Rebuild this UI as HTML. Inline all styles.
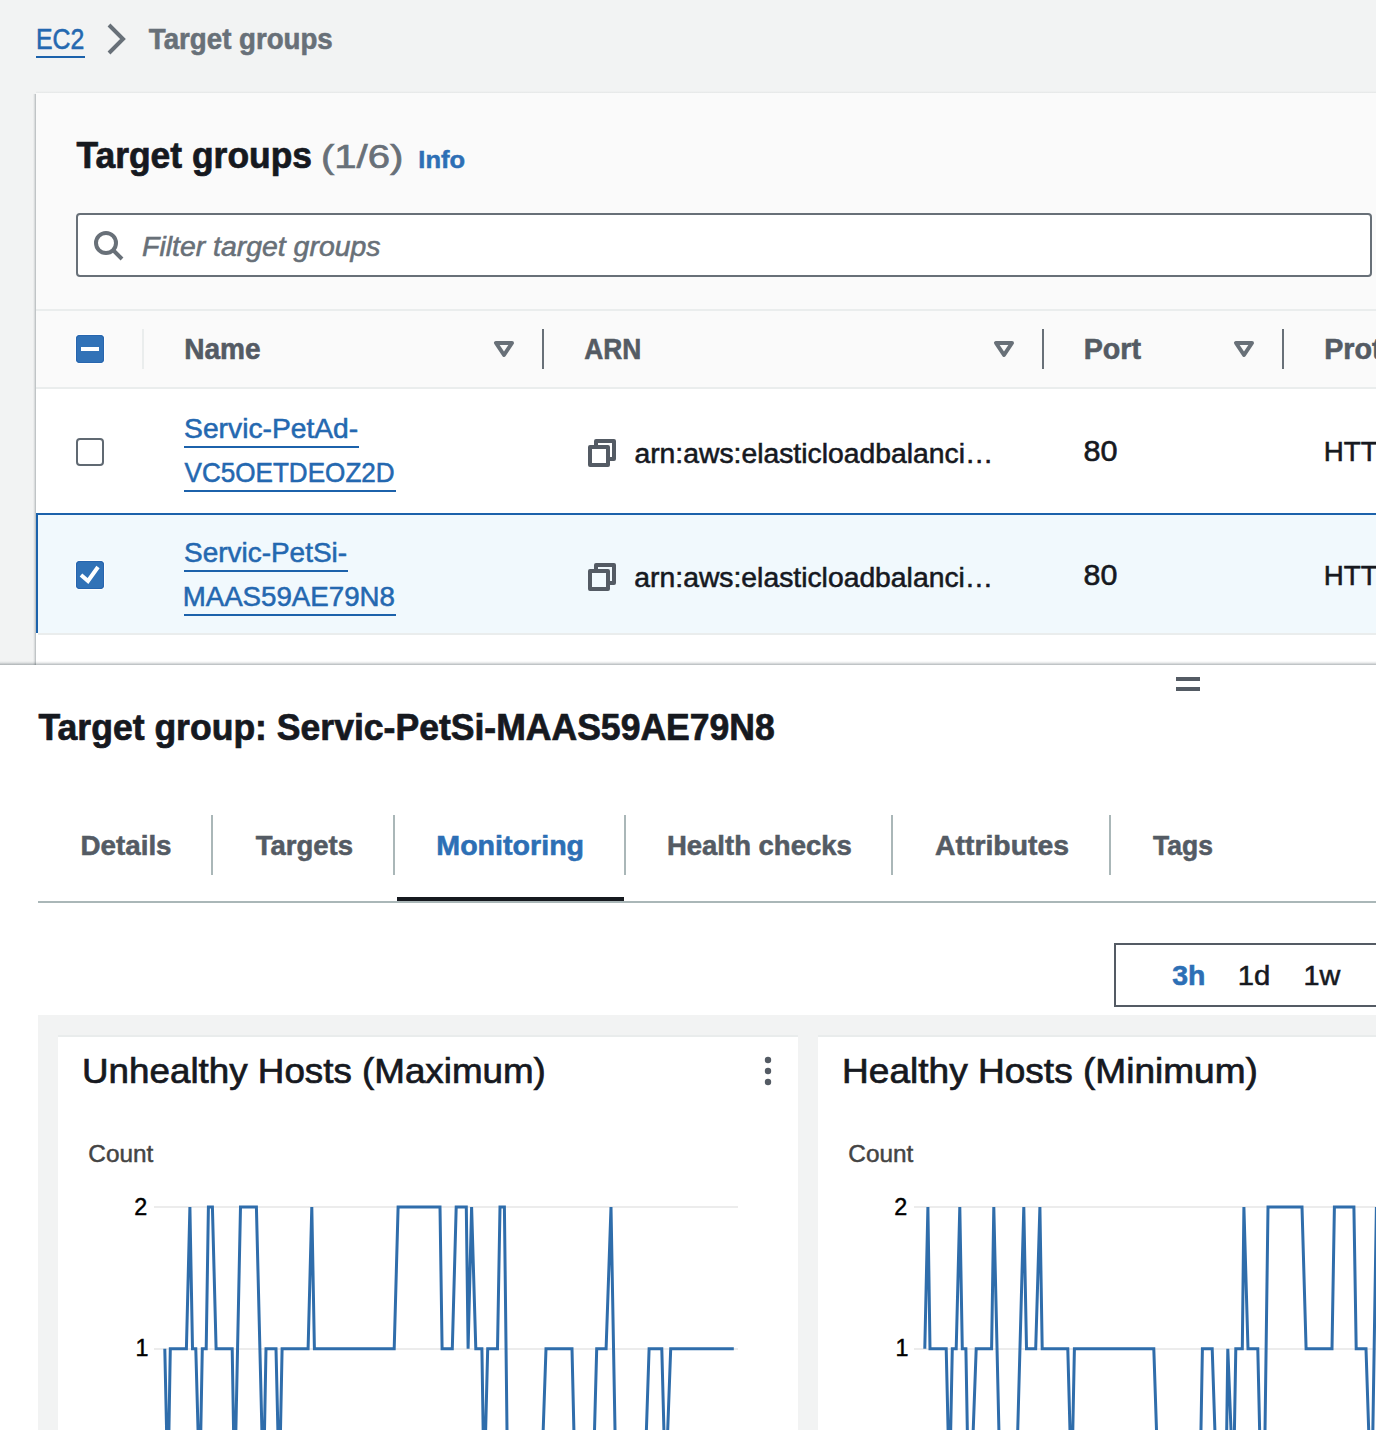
<!DOCTYPE html>
<html><head><meta charset="utf-8"><title>Target groups</title>
<style>
html,body{margin:0;padding:0;}
body{width:1376px;height:1430px;overflow:hidden;position:relative;background:#f2f3f3;font-family:"Liberation Sans",sans-serif;}
.a{position:absolute;}
.t{position:absolute;white-space:nowrap;transform-origin:0 0;-webkit-text-stroke:0.02em;font-family:"Liberation Sans",sans-serif;}
.ul{position:absolute;height:2px;background:#1c62ab;}
</style></head><body>
<!-- container -->
<div class="a" style="left:33px;top:94px;width:3px;height:571px;background:linear-gradient(to right,rgba(8,24,32,0),rgba(8,24,32,0.07) 40%,rgba(8,24,32,0.27));"></div>
<div class="a" style="left:36px;top:91px;width:1340px;height:2px;background:linear-gradient(to bottom,rgba(0,0,0,0),rgba(8,24,32,0.06));"></div>
<div class="a" style="left:36px;top:93px;width:1340px;height:216px;background:#fafafa;"></div>
<div class="a" style="left:36px;top:309px;width:1340px;height:2px;background:#eaeded;"></div>
<div class="a" style="left:36px;top:311px;width:1340px;height:76px;background:#fafafa;"></div>
<div class="a" style="left:36px;top:387px;width:1340px;height:2px;background:#eaeded;"></div>
<div class="a" style="left:36px;top:389px;width:1340px;height:281px;background:#ffffff;"></div>
<!-- selected row -->
<div class="a" style="left:36px;top:513px;width:1340px;height:120px;background:#f1f9fd;"></div>
<div class="a" style="left:36px;top:513px;width:1340px;height:2px;background:#1c62ab;"></div>
<div class="a" style="left:36px;top:513px;width:2px;height:120px;background:#1c62ab;"></div>
<div class="a" style="left:38px;top:633px;width:1338px;height:2px;background:#eaeded;"></div>
<!-- filter input -->
<div class="a" style="left:76px;top:213px;width:1292px;height:60px;border:2px solid #687078;border-radius:4px;background:#fff;"></div>
<svg class="a" style="left:92px;top:229px" width="32" height="32" viewBox="0 0 32 32"><circle cx="14" cy="14" r="10" fill="none" stroke="#687078" stroke-width="4"/><path d="M30 30 L21 21" stroke="#687078" stroke-width="4"/></svg>
<!-- breadcrumb chevron -->
<svg class="a" style="left:101px;top:23px" width="32" height="32" viewBox="0 0 32 32"><path d="M8 2 L22 16 L8 30" fill="none" stroke="#687078" stroke-width="4" stroke-linejoin="miter"/></svg>
<div class="ul" style="left:36px;top:56px;width:48.7px;"></div>
<!-- header checkbox indeterminate -->
<div class="a" style="left:76px;top:335px;width:28px;height:28px;border-radius:4px;background:#3172b7;box-shadow:inset 0 0 0 1px #2765ae,0 0 0 1px #fff;"></div>
<div class="a" style="left:81px;top:347px;width:18px;height:4px;background:#fff;"></div>
<div class="a" style="left:142px;top:329px;width:2px;height:40px;background:#eaeded;"></div>
<!-- sort carets + dividers -->
<svg class="a" style="left:488px;top:333px" width="32" height="32" viewBox="0 0 32 32"><path d="M8 10 H24 L16 22 Z" fill="none" stroke="#687078" stroke-width="4" stroke-linejoin="round"/></svg><svg class="a" style="left:988px;top:333px" width="32" height="32" viewBox="0 0 32 32"><path d="M8 10 H24 L16 22 Z" fill="none" stroke="#687078" stroke-width="4" stroke-linejoin="round"/></svg><svg class="a" style="left:1228px;top:333px" width="32" height="32" viewBox="0 0 32 32"><path d="M8 10 H24 L16 22 Z" fill="none" stroke="#687078" stroke-width="4" stroke-linejoin="round"/></svg>
<div class="a" style="left:542px;top:329px;width:2px;height:40px;background:#687078;"></div><div class="a" style="left:1042px;top:329px;width:2px;height:40px;background:#687078;"></div><div class="a" style="left:1282px;top:329px;width:2px;height:40px;background:#687078;"></div>
<!-- row checkboxes -->
<div class="a" style="left:76px;top:438px;width:24px;height:24px;border:2px solid #606972;border-radius:4px;background:#fff;"></div>
<div class="a" style="left:76px;top:561px;width:28px;height:28px;border-radius:4px;background:#3172b7;box-shadow:inset 0 0 0 1px #2765ae,0 0 0 1px #fff;"></div>
<svg class="a" style="left:76px;top:561px" width="28" height="28" viewBox="0 0 28 28"><path d="M5 14 L12 20 L22 6" fill="none" stroke="#fff" stroke-width="4" stroke-linejoin="miter"/></svg>
<!-- link underlines -->
<div class="ul" style="left:184px;top:446px;width:174.5px;"></div>
<div class="ul" style="left:184px;top:490px;width:211.6px;"></div>
<div class="ul" style="left:184px;top:570px;width:164px;"></div>
<div class="ul" style="left:184px;top:614px;width:211.6px;"></div>
<!-- copy icons -->
<svg class="a" style="left:586px;top:437px" width="32" height="32" viewBox="0 0 32 32"><g fill="none" stroke="#545b64" stroke-width="4" stroke-linejoin="round"><path d="M10 10 V4 H28 V22 H22"/><rect x="4" y="10" width="18" height="18"/></g></svg><svg class="a" style="left:586px;top:561px" width="32" height="32" viewBox="0 0 32 32"><g fill="none" stroke="#545b64" stroke-width="4" stroke-linejoin="round"><path d="M10 10 V4 H28 V22 H22"/><rect x="4" y="10" width="18" height="18"/></g></svg>
<!-- split panel -->
<div class="a" style="left:0;top:661px;width:1376px;height:4px;background:linear-gradient(to bottom,rgba(8,24,32,0),rgba(8,24,32,0.08) 40%,rgba(8,24,32,0.30));"></div>
<div class="a" style="left:0;top:665px;width:1376px;height:765px;background:#fff;"></div>
<div class="a" style="left:1176px;top:677px;width:24px;height:4px;background:#545b64;"></div>
<div class="a" style="left:1176px;top:687px;width:24px;height:4px;background:#545b64;"></div>
<!-- tabs -->
<div class="a" style="left:211px;top:815px;width:2px;height:60px;background:#aab7b8;"></div><div class="a" style="left:393px;top:815px;width:2px;height:60px;background:#aab7b8;"></div><div class="a" style="left:624px;top:815px;width:2px;height:60px;background:#aab7b8;"></div><div class="a" style="left:891px;top:815px;width:2px;height:60px;background:#aab7b8;"></div><div class="a" style="left:1109px;top:815px;width:2px;height:60px;background:#aab7b8;"></div>
<div class="a" style="left:38px;top:901px;width:1338px;height:2px;background:#aab7b8;"></div>
<div class="a" style="left:397px;top:897px;width:227px;height:4px;background:#16191f;"></div>
<!-- range box -->
<div class="a" style="left:1114px;top:943px;width:300px;height:60px;border:2px solid #545b64;background:#fff;"></div>
<!-- gray area & cards -->
<div class="a" style="left:38px;top:1015px;width:1338px;height:415px;background:#f2f3f3;"></div>
<div class="a" style="left:58px;top:1037px;width:740px;height:393px;background:#fff;"></div>
<div class="a" style="left:818px;top:1037px;width:558px;height:393px;background:#fff;"></div>
<div class="a" style="left:58px;top:1035px;width:740px;height:2px;background:#e9ecec;"></div>
<div class="a" style="left:818px;top:1035px;width:558px;height:2px;background:#e9ecec;"></div>
<svg class="a" style="left:760px;top:1052px" width="16" height="38" viewBox="0 0 16 38"><circle cx="8" cy="8" r="3.2" fill="#545b64"/><circle cx="8" cy="19" r="3.2" fill="#545b64"/><circle cx="8" cy="30" r="3.2" fill="#545b64"/></svg>
<!-- charts -->
<svg class="a" style="left:0;top:0" width="1376" height="1430" viewBox="0 0 1376 1430">
<g stroke="#ececec" stroke-width="2">
<line x1="154" y1="1207" x2="738" y2="1207"/><line x1="154" y1="1349" x2="738" y2="1349"/>
<line x1="914" y1="1207" x2="1376" y2="1207"/><line x1="914" y1="1349" x2="1376" y2="1349"/>
</g>
<g fill="none" stroke="#2f6dab" stroke-width="3" stroke-linejoin="miter" stroke-miterlimit="4">
<polyline points="164.8,1348.8 167.9,1490.6 170.3,1348.8 186.4,1348.8 189.9,1207.0 192.5,1348.8 195.8,1348.8 199.7,1490.6 202.3,1348.8 206.2,1348.8 208.4,1207.0 212.4,1207.0 216.1,1348.8 232.2,1348.8 234.6,1490.6 240.5,1207.0 256.4,1207.0 263.4,1490.6 266.0,1348.8 276.0,1348.8 279.3,1490.6 282.1,1348.8 308.1,1348.8 311.8,1207.0 314.4,1348.8 394.2,1348.8 398.1,1207.0 440.0,1207.0 442.1,1348.8 452.3,1348.8 456.2,1207.0 466.3,1207.0 468.1,1348.8 471.6,1207.0 475.8,1348.8 481.9,1348.8 484.1,1490.6 487.7,1348.8 497.5,1348.8 500.0,1207.0 504.4,1207.0 507.7,1490.6 541.1,1490.6 546.0,1348.8 572.0,1348.8 575.3,1490.6 592.9,1490.6 596.7,1348.8 606.1,1348.8 611.0,1207.0 616.1,1490.6 644.4,1490.6 649.1,1348.8 661.8,1348.8 665.5,1490.6 670.7,1348.8 733.8,1348.8"/>
<polyline points="924.8,1348.8 927.9,1207.0 930.0,1348.8 946.2,1348.8 949.5,1490.6 952.3,1348.8 956.2,1348.8 959.8,1207.0 962.3,1348.8 965.9,1348.8 968.4,1490.6 971.0,1490.6 976.2,1348.8 991.6,1348.8 993.8,1207.0 1000.3,1490.6 1016.1,1490.6 1023.8,1207.0 1026.5,1348.8 1035.7,1348.8 1039.9,1207.0 1042.2,1348.8 1067.8,1348.8 1071.6,1490.6 1074.4,1348.8 1153.8,1348.8 1158.5,1490.6 1199.9,1490.6 1202.4,1348.8 1212.2,1348.8 1216.9,1490.6 1225.9,1490.6 1227.8,1348.8 1233.4,1490.6 1235.8,1348.8 1242.3,1348.8 1243.9,1207.0 1248.0,1348.8 1257.8,1348.8 1261.0,1490.6 1264.2,1490.6 1268.0,1207.0 1302.0,1207.0 1306.1,1348.8 1332.0,1348.8 1334.4,1207.0 1353.9,1207.0 1356.2,1348.8 1366.0,1348.8 1370.7,1490.6 1371.9,1490.6 1376.4,1207.0"/>
</g>
</svg>
<span class="t" id="bc1" style="left:35px;top:25px;font-size:28.61px;line-height:28.61px;color:#2468b0;transform:translate(0.91px,0.02px) scaleX(0.8673);">EC2</span>
<span class="t" id="bc2" style="left:148px;top:24px;font-size:28.61px;line-height:28.61px;color:#687078;font-weight:700;transform:translate(0.86px,0.97px) scaleX(0.9668);">Target groups</span>
<span class="t" id="ttl" style="left:76px;top:137px;font-size:37.1px;line-height:37.1px;color:#16191f;font-weight:700;transform:translate(0.48px,0.11px) scaleX(0.9555);">Target groups</span>
<span class="t" id="cnt" style="left:320px;top:139px;font-size:33.51px;line-height:33.51px;color:#687078;transform:translate(0.89px,0.88px) scaleX(1.1984);">(1/6)</span>
<span class="t" id="info" style="left:418px;top:148px;font-size:24.11px;line-height:24.11px;color:#2d6fb5;font-weight:700;transform:translate(0.29px,0.02px) scaleX(1.0590);">Info</span>
<span class="t" id="ph" style="left:142px;top:233px;font-size:27.22px;line-height:27.22px;color:#687078;font-style:italic;transform:translate(0.02px,0.00px) scaleX(1.0440);">Filter target groups</span>
<span class="t" id="hName" style="left:184px;top:334px;font-size:28.7px;line-height:28.7px;color:#545b64;font-weight:700;transform:translate(0.19px,0.91px) scaleX(0.9786);">Name</span>
<span class="t" id="hArn" style="left:584px;top:334px;font-size:28.7px;line-height:28.7px;color:#545b64;font-weight:700;transform:translate(0.20px,0.91px) scaleX(0.9181);">ARN</span>
<span class="t" id="hPort" style="left:1083px;top:334px;font-size:28.7px;line-height:28.7px;color:#545b64;font-weight:700;transform:translate(0.64px,0.91px) scaleX(0.9987);">Port</span>
<span class="t" id="hProt" style="left:1324px;top:334px;font-size:28.7px;line-height:28.7px;color:#545b64;font-weight:700;transform:translate(0.15px,0.91px) scaleX(1.0000);">Protocol</span>
<span class="t" id="l1a" style="left:184px;top:415px;font-size:27.22px;line-height:27.22px;color:#2468b0;transform:translate(0.11px,0.41px) scaleX(1.0367);">Servic-PetAd-</span>
<span class="t" id="l1b" style="left:184px;top:458px;font-size:27.22px;line-height:27.22px;color:#2468b0;transform:translate(0.51px,0.59px) scaleX(0.9582);">VC5OETDEOZ2D</span>
<span class="t" id="l2a" style="left:184px;top:539px;font-size:27.22px;line-height:27.22px;color:#2468b0;transform:translate(0.08px,0.38px) scaleX(1.0262);">Servic-PetSi-</span>
<span class="t" id="l2b" style="left:182px;top:582px;font-size:27.22px;line-height:27.22px;color:#2468b0;transform:translate(0.65px,0.74px) scaleX(1.0168);">MAAS59AE79N8</span>
<span class="t" id="arn1" style="left:634px;top:439px;font-size:27.7px;line-height:27.7px;color:#16191f;transform:translate(0.42px,0.58px) scaleX(1.0226);">arn:aws:elasticloadbalanci…</span>
<span class="t" id="arn2" style="left:634px;top:563px;font-size:27.7px;line-height:27.7px;color:#16191f;transform:translate(0.36px,0.57px) scaleX(1.0225);">arn:aws:elasticloadbalanci…</span>
<span class="t" id="p1" style="left:1083px;top:436px;font-size:29.18px;line-height:29.18px;color:#16191f;transform:translate(0.46px,0.94px) scaleX(1.0494);">80</span>
<span class="t" id="p2" style="left:1083px;top:560px;font-size:29.18px;line-height:29.18px;color:#16191f;transform:translate(0.59px,0.95px) scaleX(1.0418);">80</span>
<span class="t" id="pr1" style="left:1323px;top:438px;font-size:27.7px;line-height:27.7px;color:#16191f;transform:translate(0.75px,0.11px) scaleX(1.0000);">HTTP</span>
<span class="t" id="pr2" style="left:1323px;top:562px;font-size:27.7px;line-height:27.7px;color:#16191f;transform:translate(0.80px,0.13px) scaleX(1.0000);">HTTP</span>
<span class="t" id="h2" style="left:38px;top:709px;font-size:36.16px;line-height:36.16px;color:#16191f;font-weight:700;transform:translate(0.48px,0.90px) scaleX(0.9834);">Target group: Servic-PetSi-MAAS59AE79N8</span>
<span class="t" id="tb1" style="left:80px;top:831px;font-size:27.9px;line-height:27.9px;color:#545b64;font-weight:700;transform:translate(0.51px,0.95px) scaleX(0.9952);">Details</span>
<span class="t" id="tb2" style="left:255px;top:831px;font-size:27.9px;line-height:27.9px;color:#545b64;font-weight:700;transform:translate(0.72px,0.95px) scaleX(0.9860);">Targets</span>
<span class="t" id="tb3" style="left:436px;top:831px;font-size:27.9px;line-height:27.9px;color:#2d6fb5;font-weight:700;transform:translate(0.31px,0.58px) scaleX(1.0259);">Monitoring</span>
<span class="t" id="tb4" style="left:666px;top:831px;font-size:27.9px;line-height:27.9px;color:#545b64;font-weight:700;transform:translate(0.88px,0.95px) scaleX(0.9861);">Health checks</span>
<span class="t" id="tb5" style="left:935px;top:831px;font-size:27.9px;line-height:27.9px;color:#545b64;font-weight:700;transform:translate(0.09px,0.95px) scaleX(1.0161);">Attributes</span>
<span class="t" id="tb6" style="left:1153px;top:831px;font-size:27.9px;line-height:27.9px;color:#545b64;font-weight:700;transform:translate(0.07px,0.95px) scaleX(0.9489);">Tags</span>
<span class="t" id="r3h" style="left:1172px;top:961px;font-size:27.99px;line-height:27.99px;color:#2d6fb5;font-weight:700;transform:translate(0.31px,0.58px) scaleX(1.0152);">3h</span>
<span class="t" id="r1d" style="left:1237px;top:961px;font-size:27.99px;line-height:27.99px;color:#16191f;transform:translate(0.83px,0.90px) scaleX(1.0461);">1d</span>
<span class="t" id="r1w" style="left:1303px;top:961px;font-size:27.99px;line-height:27.99px;color:#16191f;transform:translate(0.46px,0.90px) scaleX(1.0305);">1w</span>
<span class="t" id="c1t" style="left:82px;top:1053px;font-size:35.67px;line-height:35.67px;color:#16191f;transform:translate(0.06px,0.64px) scaleX(1.0311);">Unhealthy Hosts (Maximum)</span>
<span class="t" id="c2t" style="left:842px;top:1053px;font-size:35.67px;line-height:35.67px;color:#16191f;transform:translate(0.04px,0.54px) scaleX(1.0391);">Healthy Hosts (Minimum)</span>
<span class="t" id="c1c" style="left:88px;top:1143px;font-size:23.43px;line-height:23.43px;color:#444444;transform:translate(0.37px,0.02px) scaleX(1.0385);">Count</span>
<span class="t" id="c2c" style="left:848px;top:1143px;font-size:23.43px;line-height:23.43px;color:#444444;transform:translate(0.37px,0.02px) scaleX(1.0385);">Count</span>
<span class="t" id="c1y2" style="left:134px;top:1196px;font-size:23.33px;line-height:23.33px;color:#000;transform:translate(0.28px,0.12px) scaleX(1.0000);">2</span>
<span class="t" id="c1y1" style="left:135px;top:1337px;font-size:23.33px;line-height:23.33px;color:#000;transform:translate(0.60px,0.12px) scaleX(1.0000);">1</span>
<span class="t" id="c2y2" style="left:894px;top:1196px;font-size:23.33px;line-height:23.33px;color:#000;transform:translate(0.28px,0.12px) scaleX(1.0000);">2</span>
<span class="t" id="c2y1" style="left:895px;top:1337px;font-size:23.33px;line-height:23.33px;color:#000;transform:translate(0.60px,0.12px) scaleX(1.0000);">1</span>
</body></html>
